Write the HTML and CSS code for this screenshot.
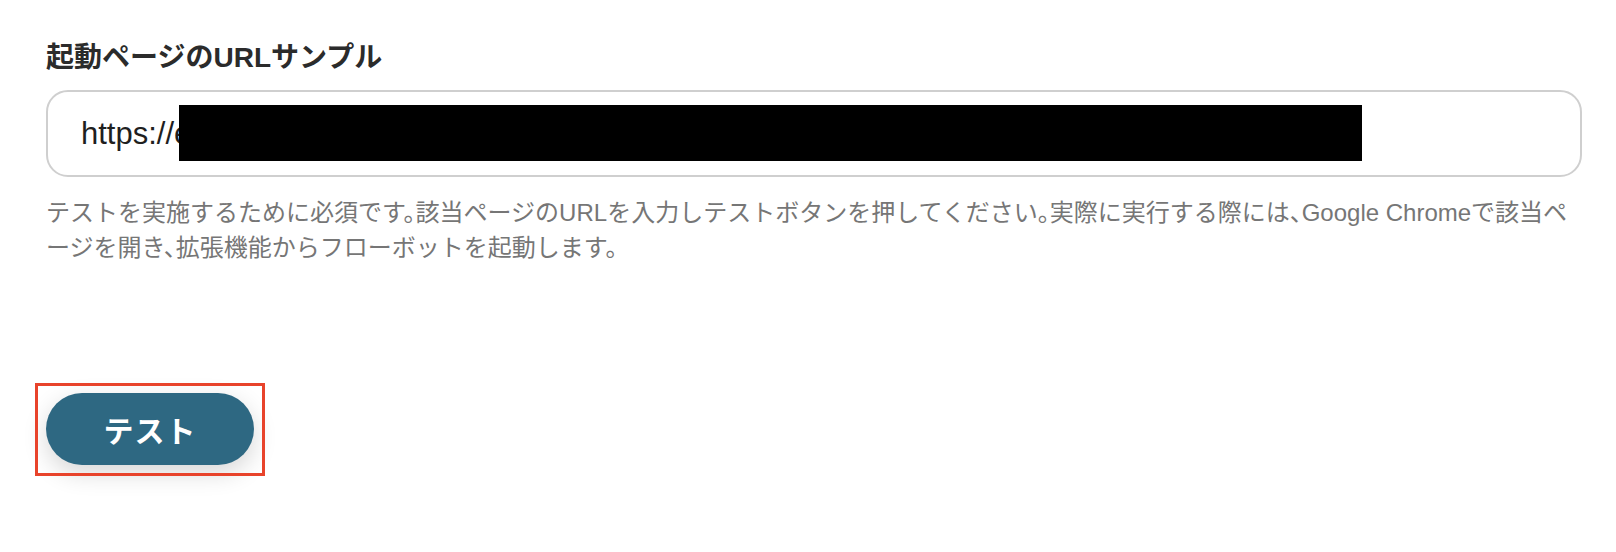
FILE: index.html
```html
<!DOCTYPE html>
<html lang="ja">
<head>
    <meta charset="UTF-8">
    <meta name="viewport" content="width=device-width, initial-scale=1.0">
    <title>起動ページのURLサンプル</title>
    <link rel="stylesheet" href="styles.css">
</head>
<body>
    <div class="page">
        <div class="field">
            <label for="start-url" class="field-label">起動ページのURLサンプル</label>
            <div class="url-box">
                <input type="text" id="start-url" class="url-input" value="https://example.com/">
                <span class="redact"></span>
            </div>
            <p class="field-note">テストを実施するために必須です。該当ページのURLを入力しテストボタンを押してください。実際に実行する際には、Google Chromeで該当ペ<br>ージを開き、拡張機能からフローボットを起動します。</p>
        </div>

        <div class="actions">
            <div class="highlight">
                <button type="button" class="btn-test">テスト</button>
            </div>
        </div>
    </div>
</body>
</html>
```

FILE: styles.css
```css
body {
    margin: 0;
    background-color: #ffffff;
    font-family: "Liberation Sans", "Noto Sans CJK JP", sans-serif;
}

.page {
    width: 1536px;
    padding: 38px 0 70px 46px;
}

.field-label {
    display: block;
    font-size: 28px;
    line-height: 39px;
    font-weight: bold;
    color: #2b2b2b;
}

.url-box {
    position: relative;
    margin-top: 13px;
    height: 83px;
    border: 2px solid #cfcfcf;
    border-radius: 22px;
    overflow: hidden;
}

.url-input {
    width: 100%;
    height: 100%;
    box-sizing: border-box;
    padding: 0 0 0 33px;
    border: none;
    outline: none;
    background: transparent;
    font-family: "Liberation Sans", sans-serif;
    font-size: 31px;
    color: #1f1f1f;
}

/* redaction box over the url */
.redact {
    position: absolute;
    left: 131px;
    top: 13px;
    width: 1183px;
    height: 56px;
    background-color: #000000;
}

.field-note {
    margin: 18px 0 0;
    font-size: 24px;
    line-height: 35px;
    color: #767676;
    font-feature-settings: "halt";
}

.actions {
    margin-top: 128px;
}

.highlight {
    position: relative;
    display: inline-block;
}

.highlight::after {
    content: "";
    position: absolute;
    top: -10px;
    left: -11px;
    right: -11px;
    bottom: -11px;
    border: 3px solid #e8432b;
}

.btn-test {
    display: block;
    width: 208px;
    height: 72px;
    border: none;
    border-radius: 36px;
    background-color: #2e6882;
    box-shadow: 0 8px 24px rgba(0, 0, 0, 0.16);
    font-family: "Noto Sans CJK JP", sans-serif;
    font-size: 30px;
    font-weight: bold;
    letter-spacing: 1px;
    color: #ffffff;
    cursor: pointer;
}
```
